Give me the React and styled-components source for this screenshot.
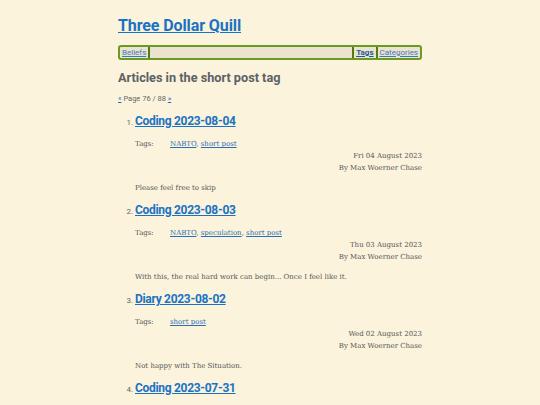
import React from 'react';
import styled, { createGlobalStyle } from 'styled-components';

const GlobalStyle = createGlobalStyle`
  html, body {
    margin: 0;
    padding: 0;
    background: #fbf3dc;
  }
  body {
    font-family: "DejaVu Serif", serif;
    color: #555;
  }
`;

const Page = styled.div`
  width: 304px;
  margin: 0 auto;
  padding-top: 14px;
`;

const SiteTitle = styled.h1`
  margin: 0;
  font-family: Roboto, "Noto Sans", sans-serif;
  font-size: 16px;
  font-weight: 700;
  line-height: 24px;
  letter-spacing: -0.1px;
  a {
    color: #1a72c4;
  }
`;

const NavBar = styled.nav`
  display: flex;
  align-items: stretch;
  margin-top: 7px;
  height: 11px;
  border: 2px solid #6b9a22;
  border-radius: 3px;
  background: #ebe3cf;
  font-family: Roboto, "Noto Sans", sans-serif;
  font-size: 8px;
  line-height: 11px;
`;

const NavItem = styled.a`
  padding: 0 2px;
  color: ${p => (p.$current ? '#1d5a9a' : '#3a7bc0')};
  font-weight: ${p => (p.$current ? 700 : 400)};
  border-right: ${p => (p.$sep ? '2px solid #4f7d10' : 'none')};
  border-left: ${p => (p.$lsep ? '2px solid #4f7d10' : 'none')};
`;

const NavSpacer = styled.span`
  flex: 1;
`;

const Heading = styled.h2`
  margin: 9px 0 0;
  font-family: Roboto, "Noto Sans", sans-serif;
  font-size: 12.7px;
  font-weight: 700;
  line-height: 18px;
  color: #5b6166;
`;

const Pager = styled.p`
  margin: 7px 0 0;
  font-family: Roboto, "Noto Sans", sans-serif;
  font-size: 7.5px;
  line-height: 10px;
  color: #666;
  a {
    color: #2a6fb5;
  }
`;

const ArticleList = styled.ol`
  margin: 7px 0 0;
  padding-left: 17px;
  li::marker {
    font-family: Roboto, "Noto Sans", sans-serif;
    font-size: 8px;
    color: #666;
  }
`;

const Article = styled.li`
  margin: 0;
`;

const ArticleTitle = styled.h3`
  margin: 0;
  font-family: Roboto, "Noto Sans", sans-serif;
  font-size: 12px;
  font-weight: 700;
  line-height: 20px;
  letter-spacing: -0.3px;
  a {
    color: #1a72c4;
  }
`;

const TagRow = styled.div`
  display: flex;
  margin-top: 8px;
  font-size: 7px;
  line-height: 10px;
  span {
    width: 35px;
  }
  a {
    color: #2a6fb5;
  }
`;

const Meta = styled.div`
  margin-top: 1px;
  text-align: right;
  font-size: 7px;
  line-height: 12px;
`;

const Summary = styled.p`
  margin: 8px 0 0;
  font-size: 7px;
  line-height: 12px;
  padding-bottom: 6px;
`;

const articles = [
  {
    title: 'Coding 2023-08-04',
    tags: ['NABTO', 'short post'],
    date: 'Fri 04 August 2023',
    summary: 'Please feel free to skip',
  },
  {
    title: 'Coding 2023-08-03',
    tags: ['NABTO', 'speculation', 'short post'],
    date: 'Thu 03 August 2023',
    summary: 'With this, the real hard work can begin... Once I feel like it.',
  },
  {
    title: 'Diary 2023-08-02',
    tags: ['short post'],
    date: 'Wed 02 August 2023',
    summary: 'Not happy with The Situation.',
  },
  {
    title: 'Coding 2023-07-31',
    tags: ['NABTO', 'short post'],
    date: 'Mon 31 July 2023',
    summary: 'Mostly just tidying up.',
  },
];

const App = () => (
  <Page>
    <GlobalStyle />
    <SiteTitle>
      <a href="#">Three Dollar Quill</a>
    </SiteTitle>
    <NavBar>
      <NavItem href="#" $sep>Beliefs</NavItem>
      <NavSpacer />
      <NavItem href="#" $current $lsep $sep>Tags</NavItem>
      <NavItem href="#">Categories</NavItem>
    </NavBar>
    <Heading>Articles in the short post tag</Heading>
    <Pager>
      <a href="#">«</a> Page 76 / 88 <a href="#">»</a>
    </Pager>
    <ArticleList>
      {articles.map(a => (
        <Article key={a.title}>
          <ArticleTitle>
            <a href="#">{a.title}</a>
          </ArticleTitle>
          <TagRow>
            <span>Tags:</span>
            <div>
              {a.tags.map((t, i) => (
                <React.Fragment key={t}>
                  {i > 0 && ', '}
                  <a href="#">{t}</a>
                </React.Fragment>
              ))}
            </div>
          </TagRow>
          <Meta>
            {a.date}
            <br />
            By Max Woerner Chase
          </Meta>
          <Summary>{a.summary}</Summary>
        </Article>
      ))}
    </ArticleList>
  </Page>
);

export default App;
